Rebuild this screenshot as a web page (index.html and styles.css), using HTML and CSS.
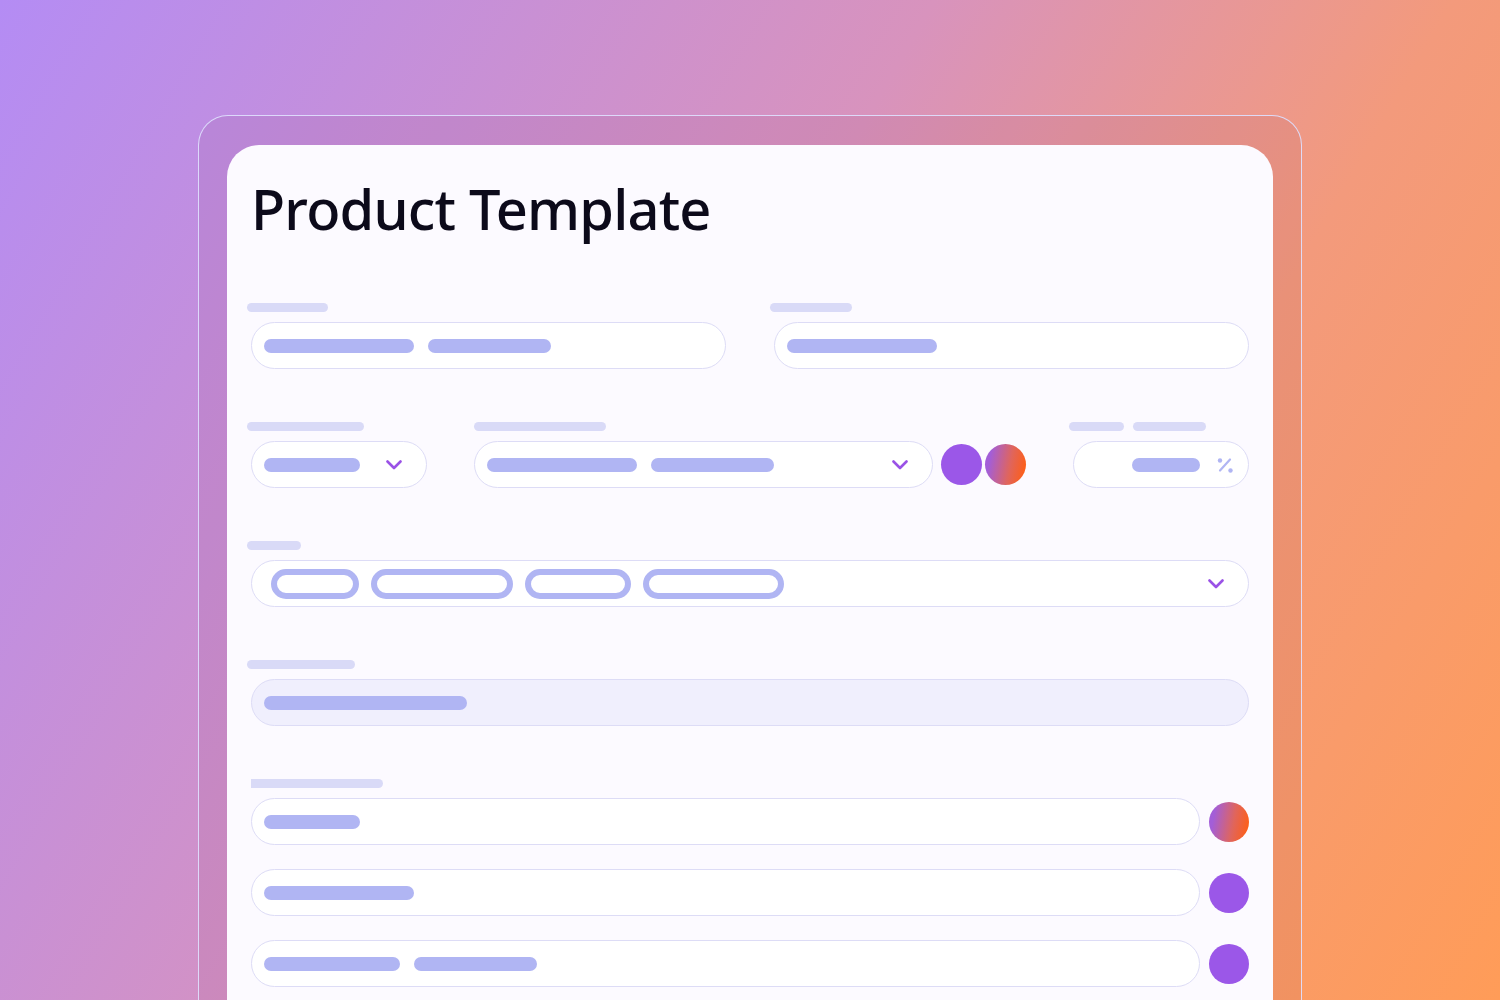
FILE: index.html
```html
<!DOCTYPE html>
<html lang="en">
<head>
    <meta charset="UTF-8">
    <meta name="viewport" content="width=device-width, initial-scale=1.0">
    <title>Product Template</title>
    <link rel="stylesheet" href="styles.css">
</head>
<body>
    <div class="frame">
        <div class="card">
            <h1>Product Template</h1>

            <div class="row row-two">
                <div class="field">
                    <span class="label" style="width: 81px"></span>
                    <div class="input">
                        <span class="bar" style="width: 150px"></span>
                        <span class="bar" style="width: 123px"></span>
                    </div>
                </div>
                <div class="field">
                    <span class="label" style="width: 82px"></span>
                    <div class="input">
                        <span class="bar" style="width: 150px"></span>
                    </div>
                </div>
            </div>

            <div class="row row-three">
                <div class="field field-small">
                    <span class="label" style="width: 117px"></span>
                    <div class="input">
                        <span class="bar" style="width: 96px"></span>
                        <svg class="chevron" width="16" height="10" viewBox="0 0 16 10"><path d="M1.5 1.5l6.5 6.5 6.5-6.5"/></svg>
                    </div>
                </div>
                <div class="field field-wide">
                    <span class="label label-flush" style="width: 132px"></span>
                    <div class="input-group">
                        <div class="input">
                            <span class="bar" style="width: 150px"></span>
                            <span class="bar" style="width: 123px"></span>
                            <svg class="chevron" width="16" height="10" viewBox="0 0 16 10"><path d="M1.5 1.5l6.5 6.5 6.5-6.5"/></svg>
                        </div>
                        <div class="swatches">
                            <span class="dot"></span>
                            <span class="dot dot-gradient"></span>
                        </div>
                    </div>
                </div>
                <div class="field field-small field-end">
                    <div class="labels">
                        <span class="label" style="width: 55px"></span>
                        <span class="label label-flush" style="width: 73px"></span>
                    </div>
                    <div class="input input-end">
                        <span class="bar" style="width: 68px"></span>
                        <svg class="percent" width="16" height="16" viewBox="0 0 16 16">
                            <path d="M13 2.5L3 13.5"/>
                            <circle cx="3" cy="3.5" r="2.2"/>
                            <circle cx="13.5" cy="13.5" r="2.2"/>
                        </svg>
                    </div>
                </div>
            </div>

            <div class="field">
                <span class="label" style="width: 54px"></span>
                <div class="input">
                    <span class="chip" style="width: 88px"></span>
                    <span class="chip" style="width: 142px"></span>
                    <span class="chip" style="width: 106px"></span>
                    <span class="chip" style="width: 141px"></span>
                    <svg class="chevron" width="16" height="10" viewBox="0 0 16 10"><path d="M1.5 1.5l6.5 6.5 6.5-6.5"/></svg>
                </div>
            </div>

            <div class="field">
                <span class="label" style="width: 108px"></span>
                <div class="input input-disabled">
                    <span class="bar" style="width: 203px"></span>
                </div>
            </div>

            <div class="field">
                <span class="label label-flat" style="width: 132px"></span>
                <div class="list">
                    <div class="list-item">
                        <div class="input">
                            <span class="bar" style="width: 96px"></span>
                        </div>
                        <span class="dot dot-gradient"></span>
                    </div>
                    <div class="list-item">
                        <div class="input">
                            <span class="bar" style="width: 150px"></span>
                        </div>
                        <span class="dot"></span>
                    </div>
                    <div class="list-item">
                        <div class="input">
                            <span class="bar" style="width: 136px"></span>
                            <span class="bar" style="width: 123px"></span>
                        </div>
                        <span class="dot"></span>
                    </div>
                </div>
            </div>
        </div>
    </div>
</body>
</html>
```

FILE: styles.css
```css
html, body {
    height: 100%;
}

body {
    margin: 0;
    overflow: hidden;
    font-family: "Noto Sans", sans-serif;
    background: linear-gradient(120deg, #b48cf4 0%, #d893bd 45%, #f39a7c 70%, #ff9c58 100%);
}

.frame {
    box-sizing: border-box;
    width: 1104px;
    height: 900px;
    margin: 115px auto 0;
    padding: 29px 28px 0;
    border: 1.5px solid rgba(222, 222, 252, 0.95);
    border-bottom: none;
    border-radius: 30px 30px 0 0;
    background-color: rgba(120, 30, 70, 0.07);
}

.card {
    height: 100%;
    padding: 30px 24px 0;
    background-color: #fcfaff;
    border-radius: 32px 32px 0 0;
    display: flex;
    flex-direction: column;
    gap: 53px;
}

h1 {
    margin: 0 0 9px 0;
    font-size: 56px;
    font-weight: 500;
    line-height: 66px;
    letter-spacing: -0.8px;
    color: #0c0a1a;
}

.row {
    display: flex;
}

.row-two {
    gap: 48px;
}

.row-two .field {
    flex: 1;
}

.row-three .field-small {
    width: 176px;
}

.field-wide {
    margin-left: 47px;
}

.field-end {
    margin-left: auto;
}

.field {
    display: flex;
    flex-direction: column;
    gap: 10px;
}

.label {
    display: block;
    height: 9px;
    margin-left: -4px;
    border-radius: 5px;
    background-color: #d9daf7;
}

.label-flush {
    margin-left: 0;
}

.label-flat {
    margin-left: 0;
    border-radius: 0 5px 5px 0;
}

.labels {
    display: flex;
    gap: 9px;
}

.input {
    box-sizing: border-box;
    height: 47px;
    padding: 0 12px;
    display: flex;
    align-items: center;
    gap: 14px;
    background-color: #fff;
    border: 1px solid #dddcf6;
    border-radius: 24px;
}

.input-disabled {
    background-color: #f0effd;
}

.input-end {
    justify-content: flex-end;
    gap: 17px;
    padding-right: 15px;
}

.bar {
    display: block;
    flex: none;
    height: 14px;
    border-radius: 7px;
    background-color: #b0b5f3;
}

.chip {
    display: block;
    flex: none;
    box-sizing: border-box;
    height: 30px;
    border: 6px solid #b0b5f3;
    border-radius: 15px;
    background-color: #fff;
}

.input .chip:first-child {
    margin-left: 7px;
}

.input .chip {
    margin-right: -2px;
}

.chevron {
    margin-left: auto;
    margin-right: 12px;
    flex: none;
}

.chevron path {
    fill: none;
    stroke: #9a52e6;
    stroke-width: 2.6;
    stroke-linecap: round;
    stroke-linejoin: round;
}

.percent {
    flex: none;
}

.percent path {
    stroke: #b0b5f3;
    stroke-width: 2.2;
    stroke-linecap: round;
}

.percent circle {
    fill: #b0b5f3;
}

.input-group {
    display: flex;
    align-items: center;
}

.input-group .input {
    width: 459px;
}

.swatches {
    display: flex;
    gap: 3px;
    margin-left: 8px;
}

.dot {
    display: block;
    flex: none;
    width: 41px;
    height: 41px;
    border-radius: 50%;
    background-color: #9b57e8;
}

.dot-gradient {
    background: linear-gradient(100deg, #a35ed8 15%, #e0655c 60%, #ff5e14 95%);
}

.list {
    display: flex;
    flex-direction: column;
    gap: 24px;
}

.list-item {
    display: flex;
    align-items: center;
    gap: 9px;
}

.list-item .input {
    flex: 1;
}

.list-item .dot {
    width: 40px;
    height: 40px;
}
```
